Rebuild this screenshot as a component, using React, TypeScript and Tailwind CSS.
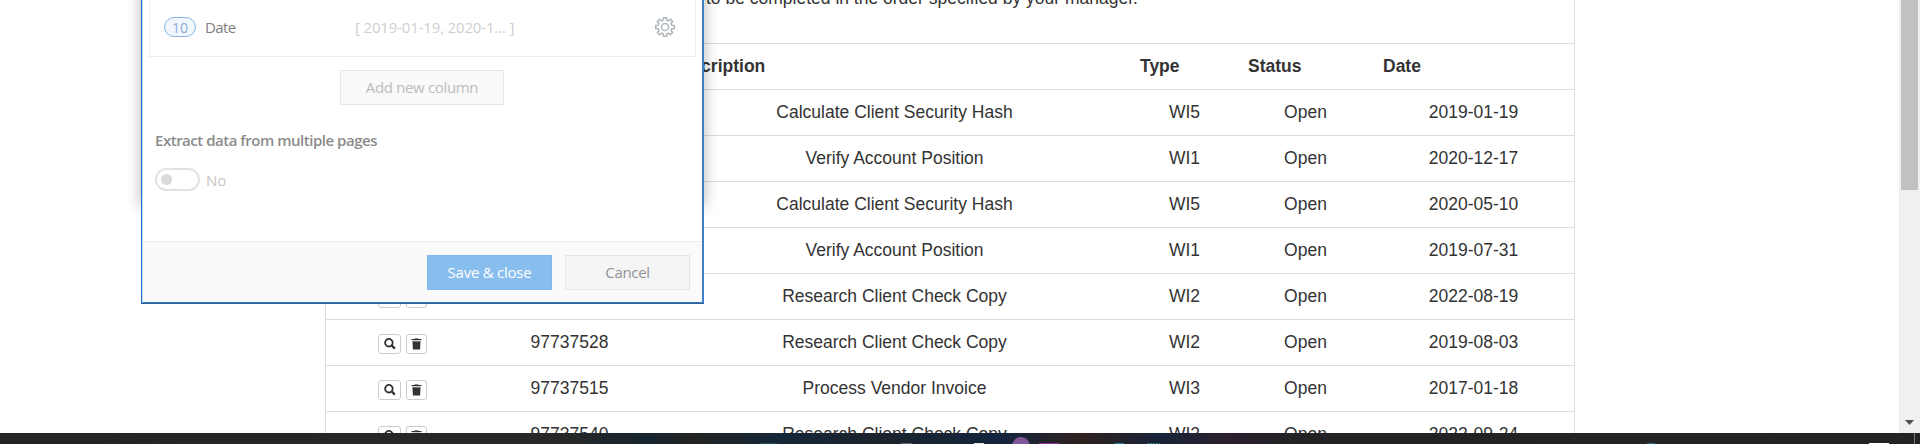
import type { ReactNode } from "react";

type Item = { id: string; description: string; type: string; date: string };

const items: Item[] = [
  { id: "97737501", description: "Calculate Client Security Hash", type: "WI5", date: "2019-01-19" },
  { id: "97737504", description: "Verify Account Position", type: "WI1", date: "2020-12-17" },
  { id: "97737509", description: "Calculate Client Security Hash", type: "WI5", date: "2020-05-10" },
  { id: "97737511", description: "Verify Account Position", type: "WI1", date: "2019-07-31" },
  { id: "97737520", description: "Research Client Check Copy", type: "WI2", date: "2022-08-19" },
  { id: "97737528", description: "Research Client Check Copy", type: "WI2", date: "2019-08-03" },
  { id: "97737515", description: "Process Vendor Invoice", type: "WI3", date: "2017-01-18" },
  { id: "97737540", description: "Research Client Check Copy", type: "WI2", date: "2022-09-24" },
];

const rowGrid = "grid h-[46px] shrink-0 grid-cols-[155px_177px_473px_107px_135px_201px] border-b border-[#dddddd] pt-[10px] leading-[25px]";

function SearchIcon() {
  return (
    <svg width="12" height="12" viewBox="0 0 12 12" fill="none" stroke="#333">
      <circle cx="4.9" cy="4.7" r="3.8" strokeWidth="1.8" />
      <path d="M7.8 7.6 L10.9 10.6" strokeWidth="2.2" />
    </svg>
  );
}

function TrashIcon() {
  return (
    <svg width="11" height="12" viewBox="0 0 11 12">
      <path d="M3.5 0 H7.5 V1 H3.5 Z" fill="#8a8a8a" />
      <path d="M0.5 1 H10.5 V2 H0.5 Z" fill="#333" />
      <path d="M1.3 2.6 H9.7 V3.6 H1.3 Z" fill="#8a8a8a" />
      <path d="M1.5 3.5 H9.5 L9.1 11.6 H1.9 Z" fill="#333" />
    </svg>
  );
}

function GearIcon() {
  const points: string[] = [];
  for (let i = 0; i < 8; i++) {
    const a = i * 45;
    [[-15, 7], [-10, 9.4], [10, 9.4], [15, 7]].forEach(([d, r]) => {
      const t = ((a + d) * Math.PI) / 180;
      points.push(`${(10 + r * Math.sin(t)).toFixed(2)},${(10 - r * Math.cos(t)).toFixed(2)}`);
    });
  }
  return (
    <svg width="20" height="20" viewBox="0 0 20 20" fill="none" stroke="#b0b6bb" strokeWidth="1.5">
      <polygon points={points.join(" ")} />
      <circle cx="10" cy="10" r="3.6" />
    </svg>
  );
}

function IconButton({ className, children }: { className: string; children: ReactNode }) {
  return (
    <button className={`flex h-5 items-center justify-center rounded-[3px] border border-[#cccccc] bg-white ${className}`}>
      {children}
    </button>
  );
}

function WorkItems() {
  return (
    <section className="ml-[325px] flex h-[433px] w-[1250px] flex-col overflow-hidden border-x border-[#dddddd] text-[17.5px] text-[#333333]">
      <p className="h-[43px] shrink-0 pl-[380px] leading-[25px]"><span className="relative -top-[14px]">to be completed in the order specified by your manager.</span></p>
      <div className={`${rowGrid} h-[47px] border-t font-bold`}>
        <div className="col-start-3 pl-[11px]">Description</div>
        <div className="pl-[9px]">Type</div>
        <div className="pl-[10px]">Status</div>
        <div className="pl-[10px]">Date</div>
      </div>
      {items.map((it) => (
        <div key={it.id} className={`${rowGrid} text-center`}>
          <div className="flex gap-[5px] pl-[52px] pt-1">
            <IconButton className="w-[23px]"><SearchIcon /></IconButton>
            <IconButton className="w-[21px]"><TrashIcon /></IconButton>
          </div>
          <div>{it.id}</div>
          <div>{it.description}</div>
          <div>{it.type}</div>
          <div>Open</div>
          <div>{it.date}</div>
        </div>
      ))}
    </section>
  );
}

function ExtractDialog() {
  return (
    <>
      <div className="absolute -top-10 left-[141px] h-[246px] w-[563px] shadow-[0_0_14px_rgba(0,0,0,0.3)]" />
      <div className="absolute left-[141px] top-0 flex h-[304px] w-[563px] flex-col border-b border-l border-b-[#36618f] border-l-[#1f6fc6] bg-white font-['Open_Sans','Noto_Sans',sans-serif] text-[15px]">
        <div className="flex grow flex-col border-b border-l border-r-2 border-b-[#2a78c8] border-l-[#c5daf0] border-r-[#3f7fc9]">
          <div className="ml-[6px] flex h-[57px] w-[547px] items-start border-x border-b border-[#ededed] pl-[14px] pt-[17px]">
            <span className="flex h-5 w-8 items-center justify-center rounded-full border border-[#85b6e6] bg-[#f1f6fc] text-[14px] text-[#8ba9d3]">10</span>
            <span className="ml-[9px] w-[150px] leading-[20px] tracking-[-0.6px] text-[#808080]">Date</span>
            <span className="w-[300px] whitespace-pre leading-[20px] tracking-[-0.16px] text-[#cfcfcf]">[ 2019-01-19, 2020-1... ]</span>
            <GearIcon />
          </div>
          <button className="ml-[197px] mt-[13px] h-[35px] w-[164px] border border-[#e6e6e6] bg-[#f9f9f9] tracking-[-0.35px] text-[#bdbdbd]">Add new column</button>
          <h2 className="ml-3 mt-[24px] leading-[22px] font-semibold tracking-[-0.48px] text-[#8b8b8b]">Extract data from multiple pages</h2>
          <div className="ml-3 mt-[17px] flex h-[23px] items-center gap-[6px]">
            <span className="flex h-[23px] w-[45px] items-center rounded-full border-2 border-[#e2e2e2] pl-1">
              <span className="size-[11px] rounded-full bg-[#d9dbdb]" />
            </span>
            <span className="pt-[2px] text-[#c6c6c6]">No</span>
          </div>
          <div className="mt-auto flex h-[61px] justify-end gap-[13px] border-t border-[#ededed] bg-[#fafafa] pr-[12px] pt-[13px]">
            <button className="h-[35px] w-[125px] border border-[#80b8ec] bg-[#88beee] tracking-[-0.25px] text-white">Save &amp; close</button>
            <button className="h-[35px] w-[125px] border border-[#e5e5e5] bg-[#f5f5f5] tracking-[-0.35px] text-[#939393]">Cancel</button>
          </div>
        </div>
      </div>
    </>
  );
}

function Scrollbar() {
  return (
    <div className="flex h-[433px] w-[21px] flex-col items-center justify-between bg-[#f0f0f0] pb-2">
      <div className="h-[190px] w-[17px] bg-[#c1c1c1]" />
      <svg width="9" height="5" viewBox="0 0 9 5"><path d="M0 0 H9 L4.5 5 Z" fill="#505050" /></svg>
    </div>
  );
}

function Taskbar() {
  return (
    <footer className="h-[11px] bg-[linear-gradient(90deg,#242424_0,#272828_560px,#16242e_650px,#222322_690px,#142637_780px,#1c232c_880px,#12253d_1000px,#2f211f_1080px,#182338_1160px,#2b1f2d_1225px,#222224_1300px,#232323_1920px)]">
      <svg width="1920" height="11" viewBox="0 0 1920 11">
        <circle cx="1021" cy="13" r="9" fill="#80589a" />
        <path d="M760 10 h17 v1 h-17z" fill="#234b5c" />
        <path d="M901 10 h11 v1 h-11z" fill="#6a6a70" />
        <path d="M974 10 h10 v1 h-10z" fill="#e4e4e4" />
        <path d="M1039 10 h20 v1 h-20z" fill="#9132a0" />
        <path d="M1115 10 h9 v1 h-9z" fill="#1b80b8" />
        <path d="M1147 10.5 h13" stroke="#287891" strokeWidth="1" strokeDasharray="2 1" />
        <path d="M1647 10 h8 v1 h-8z" fill="#27658f" />
        <path d="M1869 10 h20 v1 h-20z" fill="#fff" />
        <path d="M1914 0 h1 v11 h-1z" fill="#777" />
      </svg>
    </footer>
  );
}

export default function App() {
  return (
    <main className="relative h-[444px] w-[1920px] overflow-hidden bg-white font-['Liberation_Sans',Arial,sans-serif]">
      <div className="flex justify-between">
        <WorkItems />
        <Scrollbar />
      </div>
      <ExtractDialog />
      <Taskbar />
    </main>
  );
}
